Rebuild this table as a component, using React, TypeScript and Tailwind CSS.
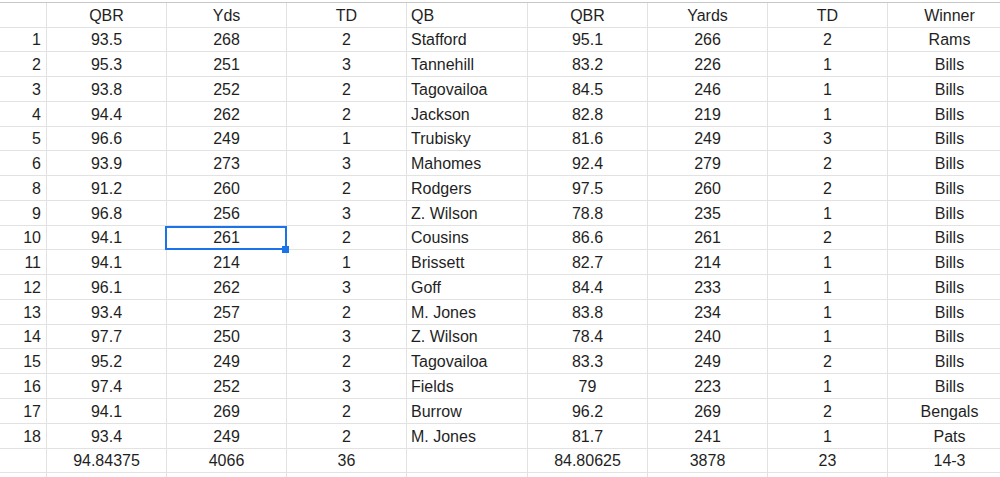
type Row = {
  n: string;
  qbr: string;
  yds: string;
  td: string;
  qb: string;
  oppQbr: string;
  oppYds: string;
  oppTd: string;
  winner: string;
};

const raw: string[][] = [
  ["1", "93.5", "268", "2", "Stafford", "95.1", "266", "2", "Rams"],
  ["2", "95.3", "251", "3", "Tannehill", "83.2", "226", "1", "Bills"],
  ["3", "93.8", "252", "2", "Tagovailoa", "84.5", "246", "1", "Bills"],
  ["4", "94.4", "262", "2", "Jackson", "82.8", "219", "1", "Bills"],
  ["5", "96.6", "249", "1", "Trubisky", "81.6", "249", "3", "Bills"],
  ["6", "93.9", "273", "3", "Mahomes", "92.4", "279", "2", "Bills"],
  ["8", "91.2", "260", "2", "Rodgers", "97.5", "260", "2", "Bills"],
  ["9", "96.8", "256", "3", "Z. Wilson", "78.8", "235", "1", "Bills"],
  ["10", "94.1", "261", "2", "Cousins", "86.6", "261", "2", "Bills"],
  ["11", "94.1", "214", "1", "Brissett", "82.7", "214", "1", "Bills"],
  ["12", "96.1", "262", "3", "Goff", "84.4", "233", "1", "Bills"],
  ["13", "93.4", "257", "2", "M. Jones", "83.8", "234", "1", "Bills"],
  ["14", "97.7", "250", "3", "Z. Wilson", "78.4", "240", "1", "Bills"],
  ["15", "95.2", "249", "2", "Tagovailoa", "83.3", "249", "2", "Bills"],
  ["16", "97.4", "252", "3", "Fields", "79", "223", "1", "Bills"],
  ["17", "94.1", "269", "2", "Burrow", "96.2", "269", "2", "Bengals"],
  ["18", "93.4", "249", "2", "M. Jones", "81.7", "241", "1", "Pats"],
];

const rows: Row[] = raw.map(([n, qbr, yds, td, qb, oppQbr, oppYds, oppTd, winner]) => ({
  n,
  qbr,
  yds,
  td,
  qb,
  oppQbr,
  oppYds,
  oppTd,
  winner,
}));

const header = ["", "QBR", "Yds", "TD", "QB", "QBR", "Yards", "TD", "Winner"];
const totals = ["", "94.84375", "4066", "36", "", "84.80625", "3878", "23", "14-3"];
const blank = ["", "", "", "", "", "", "", "", ""];

// last column runs past the right edge of the window, like the sheet does
const gridCols = "grid grid-cols-[47px_120px_120px_120px_121px_120px_120px_120px_124px]";

function Cell({ value, col }: { value: string; col: number }) {
  const align =
    col === 0 ? "justify-end pr-[5px]" : col === 4 ? "justify-start pl-[4px]" : "justify-center";
  return (
    <div
      className={`flex items-end pb-[2px] overflow-hidden whitespace-nowrap border-r border-[#e2e2e2] leading-[18px] ${align}`}
    >
      {value}
    </div>
  );
}

function SheetRow({ cells, className }: { cells: string[]; className: string }) {
  return (
    <div className={`${gridCols} border-t border-[#e2e2e2] ${className}`}>
      {cells.map((v, i) => (
        <Cell key={i} value={v} col={i} />
      ))}
    </div>
  );
}

export default function App() {
  return (
    <div className="w-[1000px] h-[477px] overflow-hidden bg-white text-[#1f1f1f] text-[16px] font-['Liberation_Sans',Arial,sans-serif]">
      <div className="relative w-[1012px] pt-[2px]">
        <SheetRow cells={header} className="h-[24.5px] !border-t-[#c7c7c7]" />
        {rows.map((r) => (
          <SheetRow
            key={r.n}
            cells={[r.n, r.qbr, r.yds, r.td, r.qb, r.oppQbr, r.oppYds, r.oppTd, r.winner]}
            className="h-[24.78px]"
          />
        ))}
        <SheetRow cells={totals} className="h-[24.78px]" />
        <SheetRow cells={blank} className="h-[24.78px]" />

        {/* active cell selection */}
        <div className="absolute left-[165px] top-[226px] w-[122px] h-[24px] border-2 border-[#1a73e8]" />
        <div className="absolute left-[282px] top-[246px] w-[7px] h-[7px] bg-[#1a73e8]" />
      </div>
    </div>
  );
}
